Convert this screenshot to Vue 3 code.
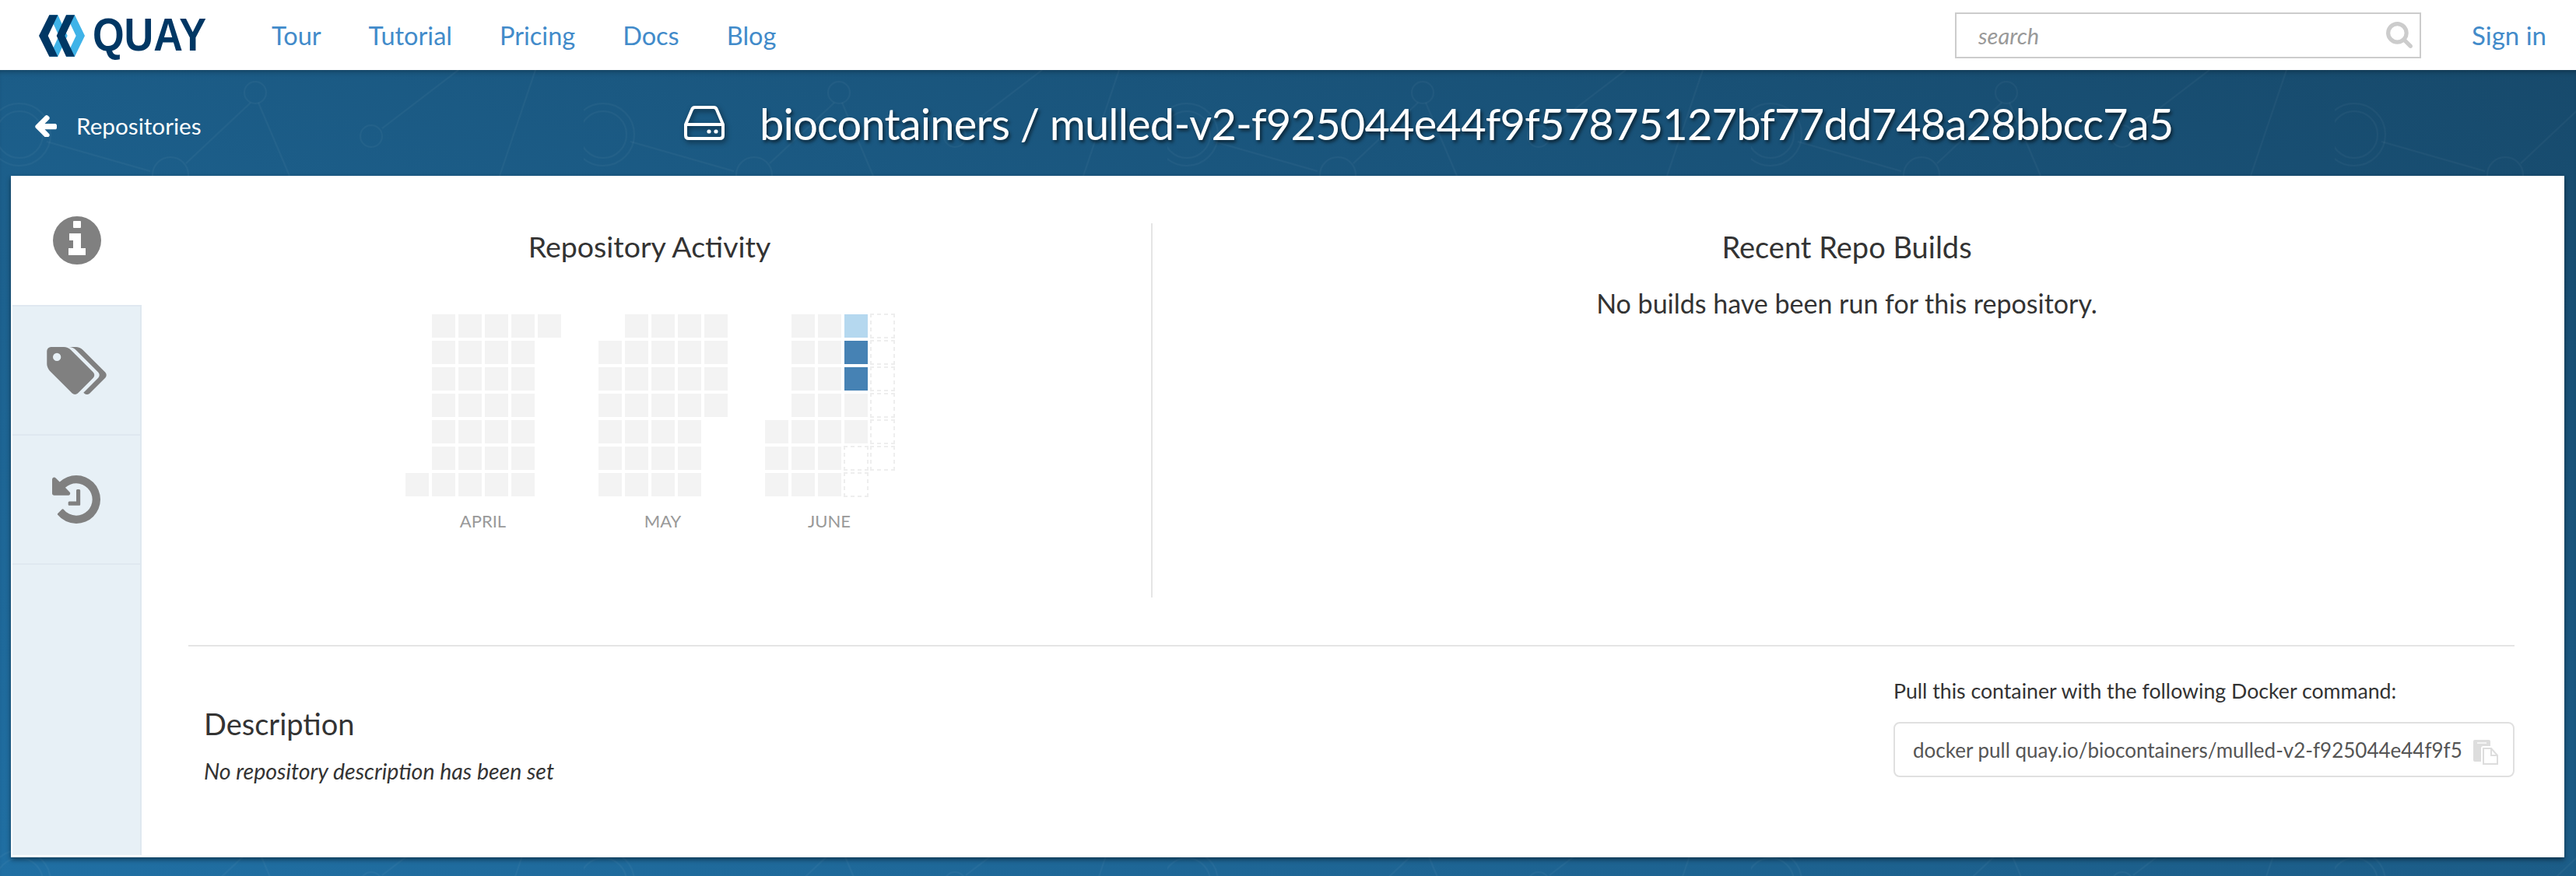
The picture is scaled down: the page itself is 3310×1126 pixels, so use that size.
<script setup>
const navLinks = ['Tour', 'Tutorial', 'Pricing', 'Docs', 'Blog']

// one string per week column, top to bottom: . empty, 0 none, 1 light, 2 strong, d upcoming
const months = [
  { name: 'APRIL', weeks: ['......0', '0000000', '0000000', '0000000', '0000000', '0......'] },
  { name: 'MAY', weeks: ['.000000', '0000000', '0000000', '0000000', '0000...'] },
  { name: 'JUNE', weeks: ['....000', '0000000', '0000000', '12200dd', 'dddddd.'] },
]

function cellsOf(month) {
  return month.weeks.flatMap((w) => w.split(''))
}
</script>

<template>
  <div class="page">
    <header class="topnav">
      <a class="logo">
        <svg class="logo-mark" viewBox="30 27 177 160">
          <path fill="#3fb3e8" d="M70 27h33l37 80-37 80H70l37-80zM135 27h33l39 80-39 80h-33l38-80z" />
          <path fill="#003764" d="M30 107 70 27h33l-38 80 38 80H70zM98 107l37-80h33l-38 80 38 80h-33z" />
        </svg>
        <span class="logo-word">QUAY</span>
      </a>
      <nav class="links">
        <a v-for="link in navLinks" :key="link">{{ link }}</a>
      </nav>
      <div class="search">
        <input type="text" placeholder="search" />
        <svg class="search-icon" viewBox="64 128 1664 1664">
          <path fill="#ccc" d="M1216 832q0-185-131.500-316.500t-316.500-131.500-316.500 131.500-131.500 316.500 131.500 316.500 316.500 131.500 316.500-131.500 131.500-316.500zm512 832q0 52-38 90t-90 38q-54 0-90-38l-343-342q-179 124-399 124-143 0-273.500-55.500t-225-150-150-225-55.500-273.500 55.500-273.500 150-225 225-150 273.500-55.500 273.500 55.500 225 150 150 225 55.500 273.500q0 220-124 399l343 343q37 37 37 90z" />
        </svg>
      </div>
      <a class="signin">Sign in</a>
    </header>

    <main class="hero">
      <svg class="hero-bg" width="100%" height="100%">
        <defs>
          <pattern id="net" width="750" height="960" patternUnits="userSpaceOnUse" x="0" y="-90">
            <g fill="none" stroke="#fff" stroke-opacity="0.035" stroke-width="2">
              <circle cx="25" cy="173" r="40" />
              <circle cx="25" cy="173" r="30" />
              <circle cx="328" cy="119" r="14" />
              <circle cx="219" cy="225" r="23" />
              <circle cx="477" cy="175" r="14" />
              <path d="M60 182 193 220M322 132 239 210M332 132 372 226M491 165 589 90M688 90 642 226" />
            </g>
          </pattern>
        </defs>
        <rect width="100%" height="100%" fill="url(#net)" />
      </svg>

      <div class="hero-head">
        <a class="back">
          <svg class="back-icon" viewBox="128 192 1536 1408">
            <path fill="#fff" d="M1664 896v128q0 53-32.500 90.500t-84.500 37.500h-704l293 294q38 36 38 90t-38 90l-75 76q-37 37-90 37-52 0-91-37l-651-652q-37-37-37-90 0-52 37-91l651-650q38-38 91-38 52 0 90 38l75 74q38 38 38 91t-38 91l-293 293h704q52 0 84.500 37.500t32.500 90.500z" />
          </svg>
          Repositories
        </a>
        <h1 class="title">
          <svg class="hdd" viewBox="0 0 52 44">
            <path fill="none" stroke="#fff" stroke-width="4" stroke-linejoin="round" d="M2 24 10 5q1-3 4-3h24q3 0 4 3l8 19v14q0 4-4 4H6q-4 0-4-4zM2 24h48" />
            <circle cx="32" cy="33" r="2.600" fill="#fff" />
            <circle cx="41" cy="33" r="2.600" fill="#fff" />
          </svg>
          <span>biocontainers / mulled-v2-f925044e44f9f57875127bf77dd748a28bbcc7a5</span>
        </h1>
      </div>

      <section class="card">
        <aside class="tabs">
          <div class="tab tab-active">
            <svg class="tab-icon" width="62" height="62" viewBox="0 0 62 62">
              <circle cx="31" cy="31" r="31" fill="#808080" />
              <rect x="26" y="6" width="10" height="9" rx="1" fill="#fff" />
              <path fill="#fff" d="M21 22h15v19h6v9H20v-9h6V31h-5z" />
            </svg>
          </div>
          <div class="tab">
            <svg class="tab-icon" width="77" height="61" viewBox="-64 128 1899 1515">
              <path fill="#808080" d="M384 448q0-53-37.500-90.500t-90.500-37.500-90.500 37.500-37.500 90.500 37.500 90.500 90.500 37.500 90.500-37.500 37.500-90.500zm1067 576q0 53-37 90l-491 492q-39 37-91 37-53 0-90-37l-715-716q-38-37-64.500-101t-26.500-117v-416q0-52 38-90t90-38h416q53 0 117 26.500t102 64.500l715 714q37 39 37 91zm384 0q0 53-37 90l-491 492q-38 38-91 38-36 0-59-14t-53-45l470-470q37-37 37-90 0-52-37-91l-715-714q-38-38-102-64.500t-117-26.500h224q53 0 117 26.500t102 64.500l715 714q37 39 37 91z" />
            </svg>
          </div>
          <div class="tab">
            <svg class="tab-icon" width="62" height="62" viewBox="128 128 1536 1536">
              <path fill="#808080" d="M1664 896q0 156-61 298t-164 245-245 164-298 61q-172 0-327-72.500t-264-204.500q-7-10-6.500-22.500t8.500-20.500l137-138q10-9 25-9 16 2 23 12 73 95 179 147t225 52q104 0 198.500-40.500t163.500-109.500 109.500-163.500 40.500-198.500-40.500-198.500-109.500-163.500-163.500-109.500-198.500-40.500q-98 0-188 35.500t-160 101.500l137 138q31 30 14 69-17 40-59 40h-448q-26 0-45-19t-19-45v-448q0-42 40-59 39-17 69 14l130 129q107-101 244.500-156.500t284.500-55.500q156 0 298 61t245 164 164 245 61 298zm-640-288v448q0 14-9 23t-23 9h-320q-14 0-23-9t-9-23v-64q0-14 9-23t23-9h224v-352q0-14 9-23t23-9h64q14 0 23 9t9 23z" />
            </svg>
          </div>
          <div class="tab-rest"></div>
        </aside>

        <div class="content">
          <div class="top-row">
            <div class="activity">
              <h3 class="activity-title">Repository Activity</h3>
              <div class="heatmap">
                <div v-for="m in months" :key="m.name" class="month">
                  <div class="cells" :style="{ gridTemplateColumns: `repeat(${m.weeks.length}, 30px)` }">
                    <span v-for="(c, i) in cellsOf(m)" :key="i" class="cell" :class="'c-' + (c === '.' ? 'e' : c)"></span>
                  </div>
                  <div class="month-name">{{ m.name }}</div>
                </div>
              </div>
            </div>
            <div class="builds">
              <h3>Recent Repo Builds</h3>
              <p>No builds have been run for this repository.</p>
            </div>
          </div>

          <div class="bottom-row">
            <div class="desc">
              <h4>Description</h4>
              <em>No repository description has been set</em>
            </div>
            <div class="pull">
              <div class="pull-label">Pull this container with the following Docker command:</div>
              <div class="pull-box">
                <span class="pull-cmd">docker pull quay.io/biocontainers/mulled-v2-f925044e44f9f5</span>
                <svg class="copy" width="32" height="32" viewBox="0 0 32 32">
                  <path fill="#ddd" d="M2 0h18q2 0 2 2v6h-9q-3 0-3 3v17H2q-2 0-2-2V2q0-2 2-2z" />
                  <rect x="5" y="3" width="12" height="2" fill="#f4f4f4" />
                  <path fill="none" stroke="#ddd" stroke-width="2" d="M13 11h10l8 9v11H13z" />
                  <path fill="#ddd" d="M22 11h2v8h7v2h-9z" />
                </svg>
              </div>
            </div>
          </div>
        </div>
      </section>
    </main>
  </div>
</template>

<style>
html, body { margin: 0; background: #fff; }
</style>

<style scoped>
.page {
  height: 1126px; width: 3310px; overflow: hidden;
  display: flex; flex-direction: column;
  font-family: Lato, "Open Sans", sans-serif; color: #333;
}

.topnav {
  height: 90px; flex: none; box-sizing: border-box;
  display: flex; align-items: center;
  padding: 0 38px 0 50px; background: #fff;
}
.logo { display: flex; align-items: center; gap: 10px; }
.logo-mark { width: 59px; height: 54px; margin-top: 1px; }
.logo-word {
  display: block; width: 144px; transform: scaleX(0.87); transform-origin: left center;
  font-family: "Liberation Sans", sans-serif;
  font-weight: 700; font-size: 60px; line-height: 60px; color: #003764;
}
.links { display: flex; gap: 61px; margin-left: 86px; font-size: 32.500px; color: #428bca; }
.search {
  margin-left: auto; width: 599px; height: 59px; box-sizing: border-box;
  border: 2px solid #ccc; display: flex; align-items: center; padding: 0 9px 0 26px;
}
.search input {
  flex: 1; border: 0; outline: 0; font: italic 29px Lato, sans-serif; color: #999; background: none;
}
.search input::placeholder { color: #999; opacity: 1; }
.search-icon { width: 34px; height: 34px; }
.signin { margin-left: 65px; font-size: 33px; color: #428bca; }

.hero {
  flex: 1; position: relative; display: flex; flex-direction: column;
  background: linear-gradient(to top right, #206fa3, #174a6c);
  box-shadow: inset 0 6px 6px -4px rgba(0, 0, 0, 0.3);
}
.hero-bg { position: absolute; inset: 0; }

.hero-head {
  position: relative; height: 136px; flex: none;
  display: flex; align-items: center; padding-left: 44px;
}
.back {
  width: 835px; display: flex; align-items: center; gap: 25px;
  font-size: 29.700px; color: #fff; margin-top: 6px;
}
.back-icon { width: 29px; height: 29px; }
.title {
  margin: 0; display: flex; align-items: center; gap: 45px;
  font-size: 56px; letter-spacing: -0.83px; font-weight: 400; color: #fff; white-space: nowrap;
  text-shadow: 2px 3px 4px rgba(0, 0, 0, 0.6);
}
.hdd { width: 52px; height: 44px; filter: drop-shadow(2px 3px 3px rgba(0, 0, 0, 0.5)); }

.card {
  position: relative; flex: 1; margin: 0 15px 24px 14px;
  background: #fff; display: flex; padding: 0 0 3px 2px;
  box-shadow: 0 3px 6px rgba(0, 0, 0, 0.45);
}
.tabs { width: 166px; flex: none; display: flex; flex-direction: column; }
.tab {
  height: 166px; box-sizing: border-box; display: flex; align-items: center; justify-content: center;
  background: #e7f0f6; border-right: 2px solid #dfe8f0; border-top: 2px solid #dfe8f0;
}
.tab-active { background: #fff; border: 0; }
.tab-rest { flex: 1; background: #e7f0f6; border-right: 2px solid #dfe8f0; border-top: 2px solid #dfe8f0; }

.content { flex: 1; min-width: 0; padding: 61px 64px 0 60px; }
.top-row { display: flex; height: 481px; }
.activity { width: 1239px; box-sizing: border-box; padding-right: 52px; border-right: 2px solid #e5e5e5; text-align: center; }
.builds { flex: 1; padding-left: 34px; text-align: center; }
h3 { margin: 6px 0 0; font-size: 38px; line-height: 48px; font-weight: 400; color: #333; }
.activity-title { font-size: 37.500px; }
.builds p { margin: 26px 0 0; font-size: 34px; line-height: 46px; color: #333; }

.heatmap { display: flex; justify-content: center; gap: 48px; margin-top: 63px; }
.month { display: flex; flex-direction: column; align-items: center; }
.cells {
  display: grid; grid-auto-flow: column; grid-template-rows: repeat(7, 30px); gap: 4px;
}
.cell { display: block; width: 30px; height: 30px; }
.c-0 { background: #f3f3f3; }
.c-1 { background: #b5d8ef; }
.c-2 { background: #4682b4; }
.c-d {
  margin: -1px; width: 32px; height: 32px;
  background:
    repeating-linear-gradient(90deg, #eee 0 5px, transparent 5px 9px) top / 100% 2px no-repeat,
    repeating-linear-gradient(90deg, #eee 0 5px, transparent 5px 9px) bottom / 100% 2px no-repeat,
    repeating-linear-gradient(0deg, #eee 0 5px, transparent 5px 9px) left / 2px 100% no-repeat,
    repeating-linear-gradient(0deg, #eee 0 5px, transparent 5px 9px) right / 2px 100% no-repeat;
}
.month-name { margin-top: 18px; font-size: 22px; line-height: 28px; color: #999; }

.bottom-row {
  display: flex; justify-content: space-between;
  margin-top: 61px; border-top: 2px solid #e5e5e5;
}
.desc { padding: 76px 0 0 20px; }
h4 { margin: 0; font-size: 38px; line-height: 46px; font-weight: 400; color: #333; }
.desc em { display: block; margin-top: 19px; font-size: 28.500px; line-height: 38px; color: #333; }
.pull { width: 798px; padding-top: 38px; }
.pull-label { font-size: 26.700px; line-height: 38px; color: #333; }
.pull-box {
  margin-top: 21px; height: 71px; box-sizing: border-box;
  border: 2px solid #e0e0e0; border-radius: 8px;
  display: flex; align-items: center; padding: 0 19px 0 23px; gap: 14px;
}
.pull-cmd { flex: 1; min-width: 0; white-space: nowrap; font-size: 26px; color: #555; }
.copy { flex: none; margin-top: 6px; }
</style>
